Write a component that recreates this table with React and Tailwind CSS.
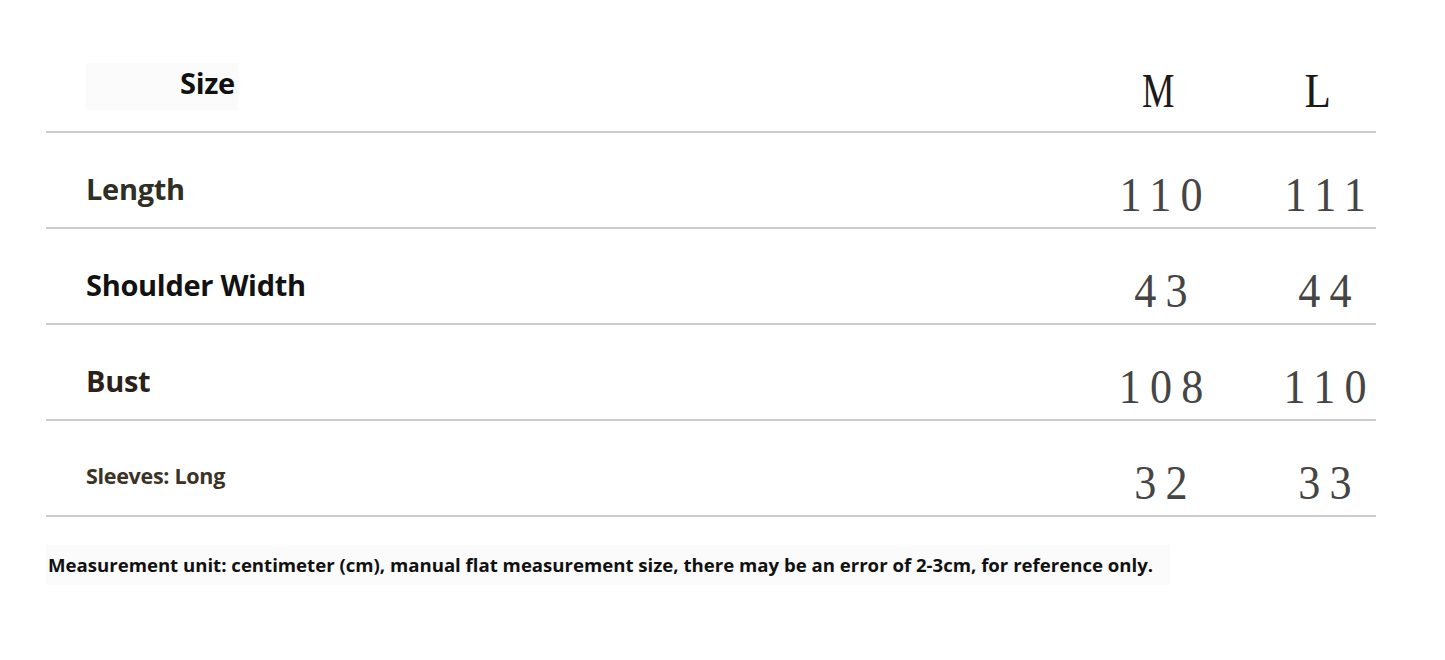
const rows = [
  { label: 'Length', m: '110', l: '111', size: 'text-[29px]', color: 'text-[#2f3024]' },
  { label: 'Shoulder Width', m: '43', l: '44', size: 'text-[29px]', color: 'text-[#121212]' },
  { label: 'Bust', m: '108', l: '110', size: 'text-[29px]', color: 'text-[#2d1f1a]' },
  { label: 'Sleeves: Long', m: '32', l: '33', size: 'text-[21.5px]', color: 'text-[#3b3325]' },
];

const sans = "font-['Open_Sans','Noto_Sans',sans-serif]";
const serif = "font-['Liberation_Serif','DejaVu_Serif',serif]";

export default function App() {
  return (
    <div className="w-[1445px] h-[660px] bg-white overflow-hidden">
      <div className="ml-[46px] w-[1330px]">
        {/* header */}
        <div className="grid grid-cols-[1030px_170px_130px] h-[133px] border-b-2 border-[#cbcbcb]">
          <div className="pt-[63px] pl-[40px]">
            <div className={`${sans} w-[152px] h-[47px] bg-[#fbfbfb] pl-[94px] text-[29px] font-bold tracking-[-0.3px] leading-[40px] text-[#111]`}>
              Size
            </div>
          </div>
          <div className={`${serif} pt-[66px] pr-[6px] flex justify-center text-[48px] leading-[50px] text-[#1c1a18]`}>
            <span className="inline-block scale-x-[0.76]">M</span>
          </div>
          <div className={`${serif} pt-[66px] pl-[14px] flex justify-center text-[48px] leading-[50px] text-[#1c1a18]`}>
            <span className="inline-block scale-x-[0.9]">L</span>
          </div>
        </div>

        {rows.map((r) => (
          <div key={r.label} className="grid grid-cols-[1030px_170px_130px] h-[96px] items-center border-b-2 border-[#cbcbcb]">
            <div className={`${sans} ${r.size} ${r.color} pl-[40px] pt-[16px] font-bold tracking-[-0.3px] leading-none`}>
              {r.label}
            </div>
            <div className={`${serif} pt-[30px] flex justify-center text-[48px] leading-none tracking-[10px] text-[#454545]`}>
              <span className="inline-block shrink-0 pl-[10px] scale-x-[0.92]">{r.m}</span>
            </div>
            <div className={`${serif} pl-[28px] pt-[30px] flex justify-center text-[48px] leading-none tracking-[10px] text-[#454545]`}>
              <span className="inline-block shrink-0 pl-[10px] scale-x-[0.92]">{r.l}</span>
            </div>
          </div>
        ))}

        {/* note */}
        <div className="mt-[28px] w-[1124px] h-[40px] bg-[#fbfbfb] flex items-center">
          <p className={`${sans} pl-[2px] text-[18.6px] font-bold text-[#111]`}>
            Measurement unit: centimeter (cm), manual flat measurement size, there may be an error of 2-3cm, for reference only.
          </p>
        </div>
      </div>
    </div>
  );
}
